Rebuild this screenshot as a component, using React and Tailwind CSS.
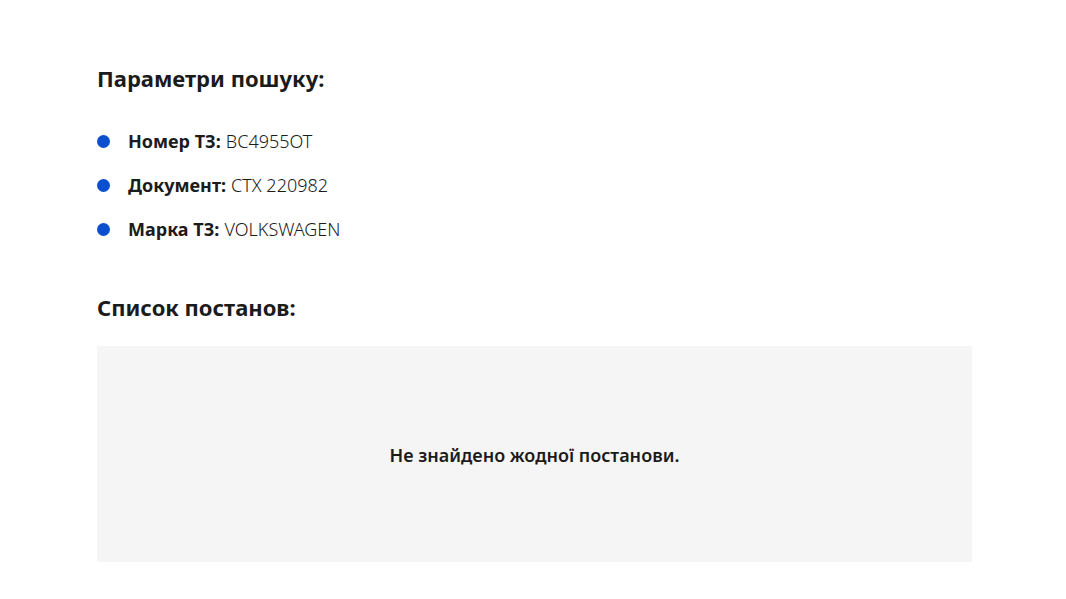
export default function App() {
  const items = [
    ["Номер ТЗ:", "BC4955OT"],
    ["Документ:", "CTX 220982"],
    ["Марка ТЗ:", "VOLKSWAGEN"],
  ];
  return (
    <div className="min-h-[599px] bg-white text-[#1b1b1b]" style={{ fontFamily: '"Noto Sans", sans-serif' }}>
      <div className="ml-[97px] w-[875px] pt-[63px]">
        <h2 className="text-[22px] font-bold leading-[30px]">Параметри пошуку:</h2>
        <ul className="mt-[34px] flex flex-col gap-[16px]">
          {items.map(([k, v]) => (
            <li key={k} className="flex items-center h-[28px] text-[18px]">
              <span className="w-[13px] h-[13px] rounded-full bg-[#0b4fd0] mr-[18px]" />
              <span className="font-bold">{k}</span>
              <span className="ml-[5px] font-light">{v}</span>
            </li>
          ))}
        </ul>
        <h2 className="mt-[49px] text-[22px] font-bold leading-[30px]">Список постанов:</h2>
        <div className="mt-[24px] h-[216px] bg-[#f5f5f5] flex items-center justify-center">
          <p className="text-[18px] font-semibold pt-[2px]">Не знайдено жодної постанови.</p>
        </div>
      </div>
    </div>
  );
}
